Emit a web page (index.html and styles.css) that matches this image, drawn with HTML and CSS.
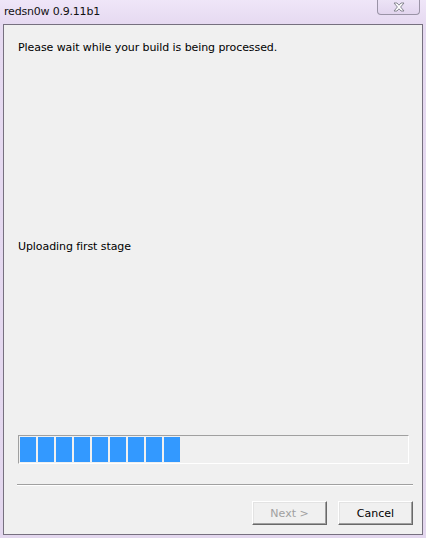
FILE: index.html
```html
<!DOCTYPE html>
<html lang="en">
<head>
    <meta charset="UTF-8">
    <title>redsn0w 0.9.11b1</title>
    <link rel="stylesheet" href="styles.css">
</head>
<body>
    <div class="window">
        <div class="titlebar">
            <span class="title">redsn0w 0.9.11b1</span>
            <button class="close-btn" aria-label="Close">
                <svg width="14" height="10" viewBox="0 0 14 10">
                    <path d="M2 1 L5 1 L7 3.2 L9 1 L12 1 L8.6 5 L12 9 L9 9 L7 6.8 L5 9 L2 9 L5.4 5 Z" fill="#ffffff" stroke="#7a7a86" stroke-width="0.9" stroke-linejoin="round"/>
                </svg>
            </button>
        </div>

        <div class="client">
            <p class="message">Please wait while your build is being processed.</p>
            <p class="status">Uploading first stage</p>

            <div class="progress">
                <span class="block"></span>
                <span class="block"></span>
                <span class="block"></span>
                <span class="block"></span>
                <span class="block"></span>
                <span class="block"></span>
                <span class="block"></span>
                <span class="block"></span>
                <span class="block"></span>
            </div>

            <div class="separator"></div>

            <div class="buttons">
                <button class="btn" disabled>Next &gt;</button>
                <button class="btn">Cancel</button>
            </div>
        </div>
    </div>
</body>
</html>
```

FILE: styles.css
```css
html, body {
    margin: 0;
    padding: 0;
}
body {
    width: 426px;
    height: 538px;
    overflow: hidden;
    background: #e4d8ef;
    font-family: "DejaVu Sans", Tahoma, sans-serif;
    font-size: 11px;
    color: #000;
}
.window {
    display: flex;
    flex-direction: column;
    height: 538px;
    background: linear-gradient(to bottom, #efe6f8 0px, #e6daf1 24px, #e3d7ee 100%);
}
.titlebar {
    display: flex;
    align-items: flex-start;
    justify-content: space-between;
    height: 24px;
    padding-left: 4px;
    padding-right: 6px;
}
.title {
    font-size: 11px;
    line-height: 24px;
    letter-spacing: -0.2px;
    color: #111;
}
.close-btn {
    width: 43px;
    height: 15px;
    margin: 0;
    padding: 0;
    border: 1px solid #9a93a6;
    border-top: none;
    border-radius: 0 0 4px 4px;
    background: linear-gradient(to bottom, #ece3f6, #e2d5ee);
    display: flex;
    align-items: center;
    justify-content: center;
}
.client {
    flex: 1;
    margin: 0 3px 3px 3px;
    border: 1px solid #76707f;
    background: #f0f0f0;
    padding: 0 9px 0 13px;
    display: flex;
    flex-direction: column;
}
.message {
    margin: 16px 0 0 1px;
    line-height: 14px;
    letter-spacing: -0.08px;
}
.status {
    margin: 185px 0 0 1px;
    line-height: 14px;
    letter-spacing: -0.08px;
}
.progress {
    display: flex;
    gap: 2px;
    height: 25px;
    margin: 181px 4px 0 1px;
    padding: 1px;
    border: 1px solid #a0a0a0;
    border-right-color: #ffffff;
    border-bottom-color: #ffffff;
    background: #f0f0f0;
}
.block {
    width: 16px;
    background: #3399ff;
}
.separator {
    height: 1px;
    margin-top: 20px;
    background: #a0a0a0;
    border-bottom: 1px solid #ffffff;
}
.buttons {
    display: flex;
    justify-content: flex-end;
    gap: 11px;
    margin-top: 15px;
}
.btn {
    width: 75px;
    height: 24px;
    margin: 0;
    padding: 0;
    font-family: "DejaVu Sans", Tahoma, sans-serif;
    font-size: 11px;
    color: #000;
    background: #f0f0f0;
    border: 1px solid;
    border-color: #ffffff #696969 #696969 #ffffff;
    box-shadow: inset -1px -1px 0 #a0a0a0, inset 1px 1px 0 #e3e3e3;
}
.btn:disabled {
    color: #a0a0a0;
}
```
